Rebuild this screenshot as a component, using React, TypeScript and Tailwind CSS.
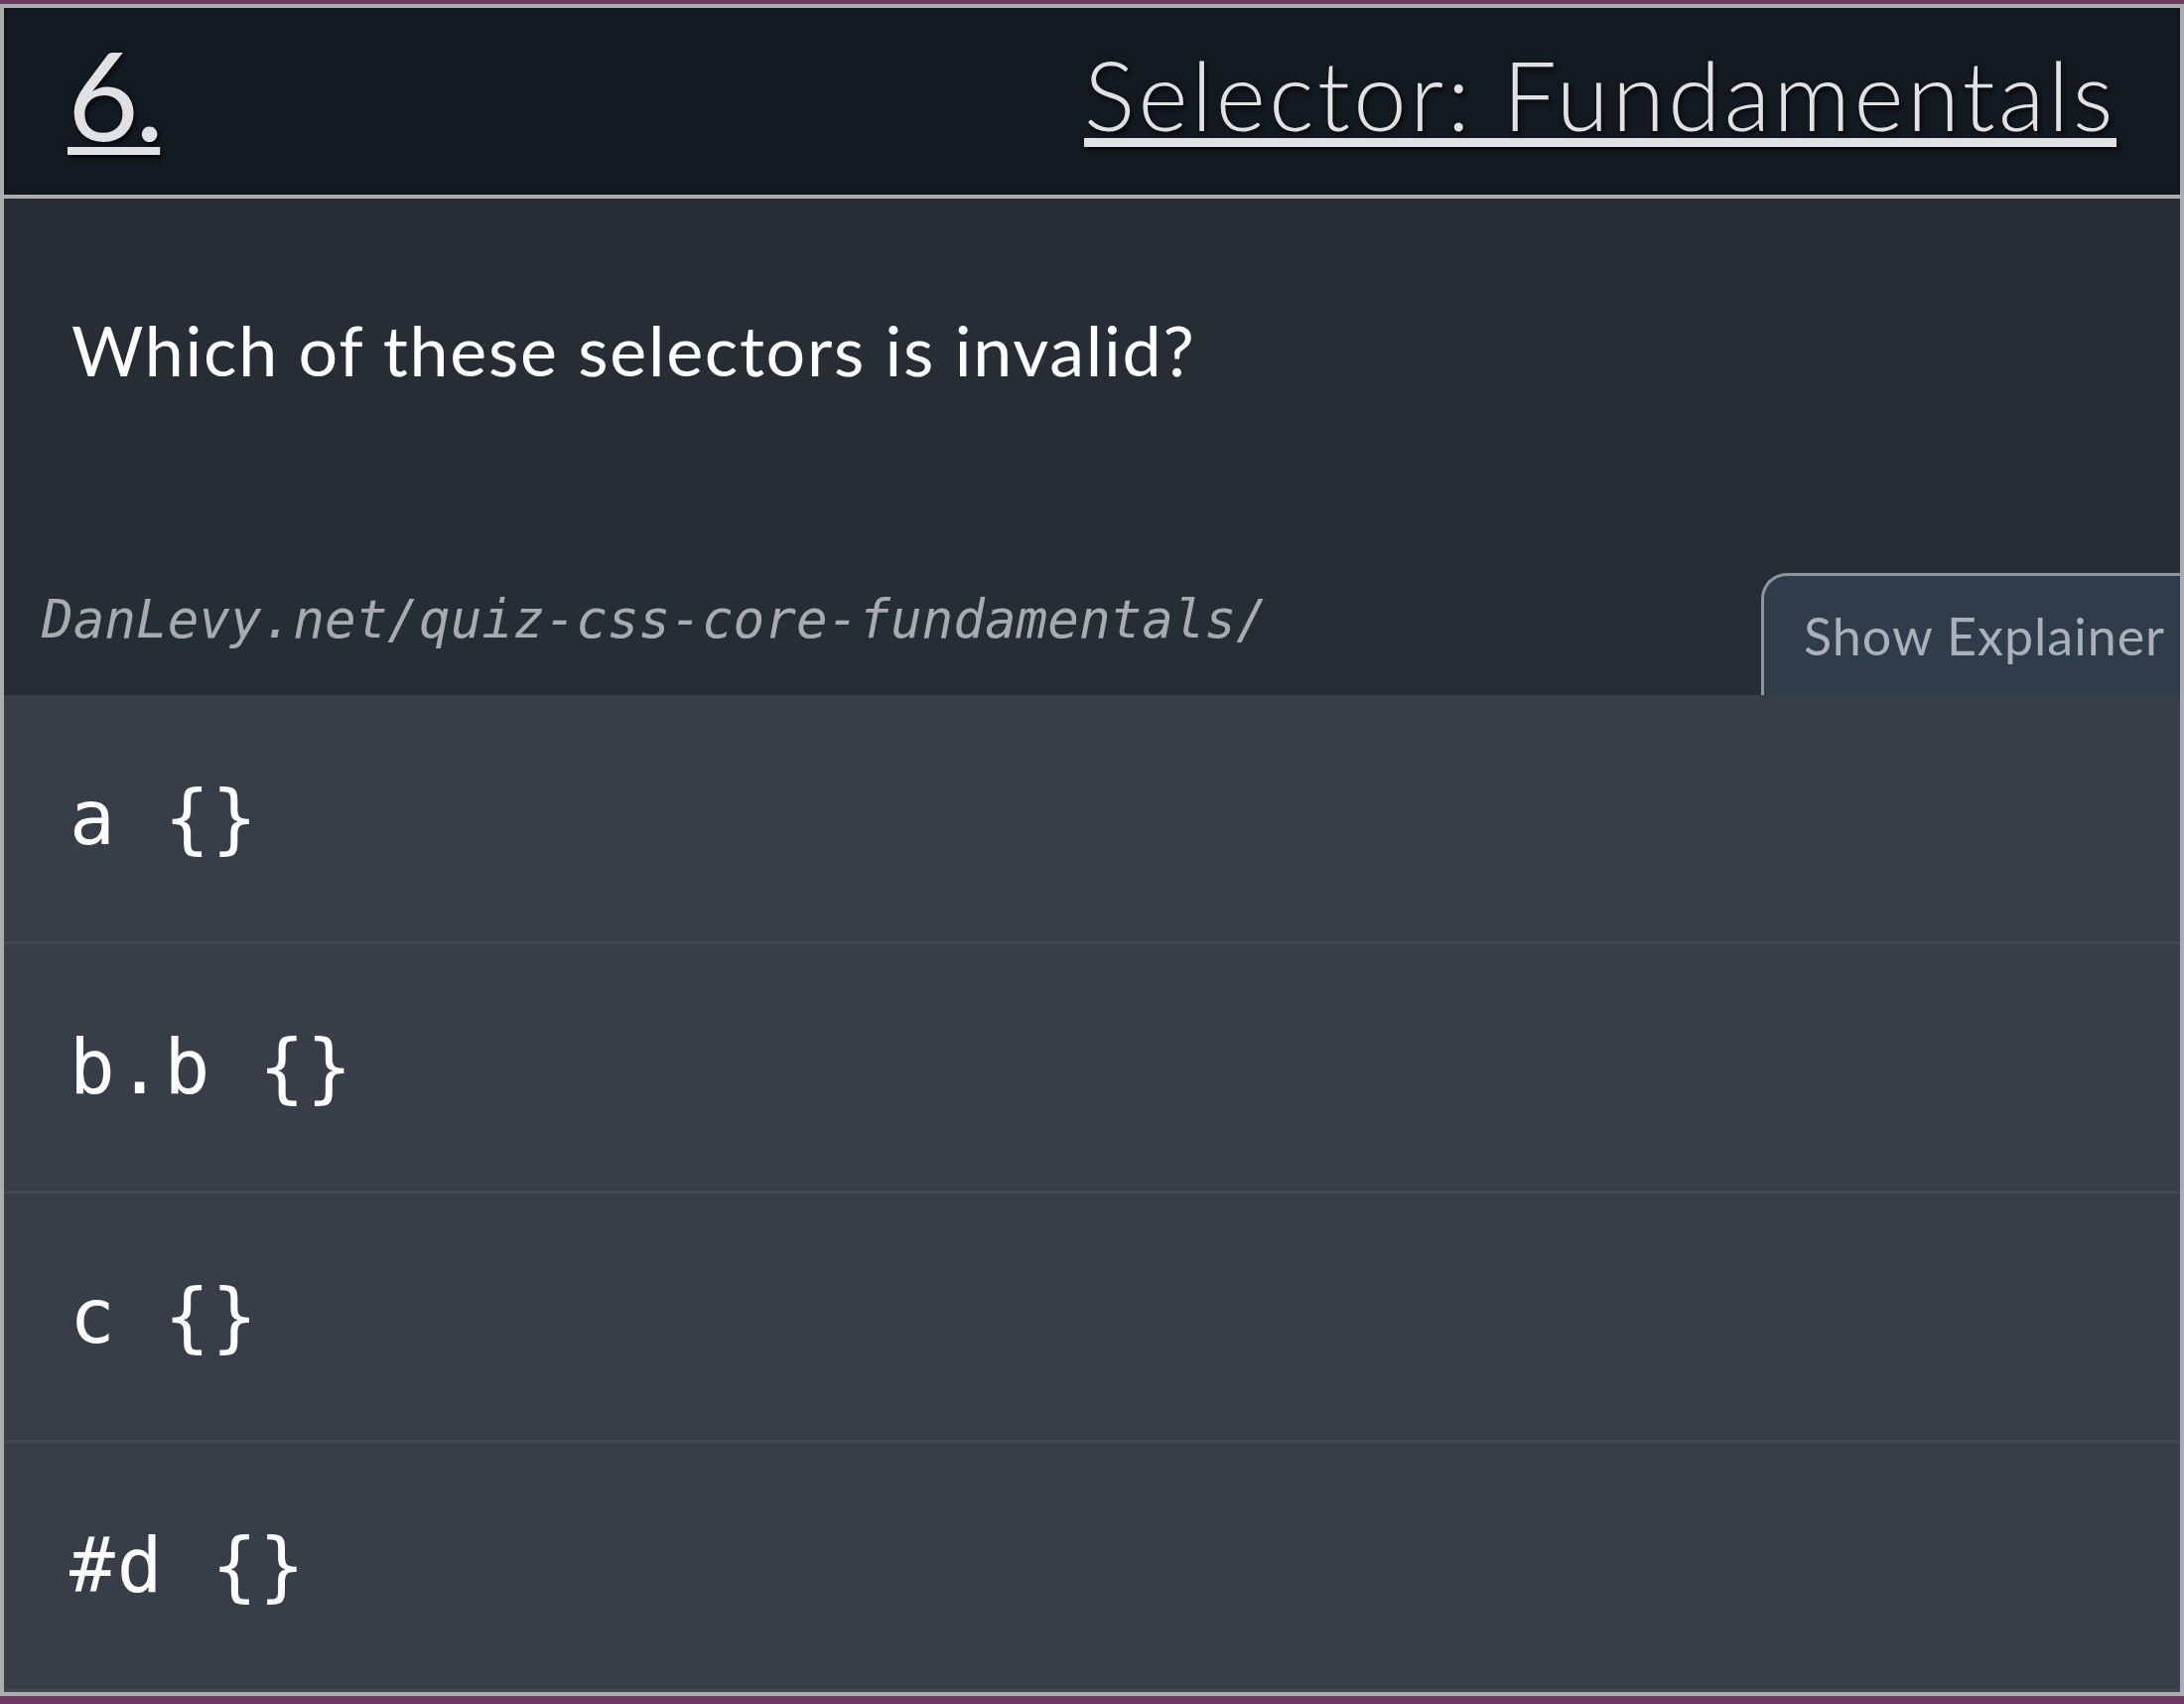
const options = ['a {}', 'b.b {}', 'c {}', '#d {}']

export default function App() {
  return (
    <div className="min-h-screen bg-[#6b3a62] pt-[4px] pb-[8px]">
      <div className="border-[4px] border-[#adadad] bg-[#262d34]">
        {/* Header */}
        <header className="h-[192px] flex items-start justify-between px-[64px] bg-[#131920] text-[#dfe1e4] border-b-[4px] border-[#adadad] font-['Lato',sans-serif] [text-shadow:2px_3px_4px_rgba(0,0,0,0.7)]">
          <h2 className="mt-[24px] text-[124px] leading-none font-normal tracking-[-4px] underline decoration-[8px] underline-offset-[6px]">
            6.
          </h2>
          <h1 className="mt-[39px] text-[96px] leading-none font-light tracking-[3.5px] underline decoration-[9px] underline-offset-[7px]">
            Selector: Fundamentals
          </h1>
        </header>

        {/* Question */}
        <section className="pt-[110px]">
          <p className="px-[68px] text-[70px] leading-[84px] tracking-[1.7px] text-white font-['Lato',sans-serif]">
            Which of these selectors is invalid?
          </p>
          <div className="mt-[183px] flex items-end justify-between">
            <span className="pl-[38px] pb-[36px] text-[52.6px] italic text-[#a7abb1] font-['DejaVu_Sans_Mono',monospace]">
              DanLevy.net/quiz-css-core-fundamentals/
            </span>
            <button className="h-[123px] w-[422px] pl-[40px] text-left border-l-[3px] border-t-[3px] border-[#8f959b] rounded-tl-[26px] bg-[#2f3d4a] text-[52px] tracking-[1px] text-[#a9b0b8] font-['Lato',sans-serif]">
              Show Explainer
            </button>
          </div>
        </section>

        {/* Options */}
        <ul className="bg-[#373e47]">
          {options.map((opt) => (
            <li
              key={opt}
              className="h-[251px] flex items-center px-[66px] border-b-[3px] border-[#424950] text-[76px] tracking-[2px] text-white whitespace-pre font-['DejaVu_Sans_Mono',monospace]"
            >
              {opt}
            </li>
          ))}
        </ul>
      </div>
    </div>
  )
}
